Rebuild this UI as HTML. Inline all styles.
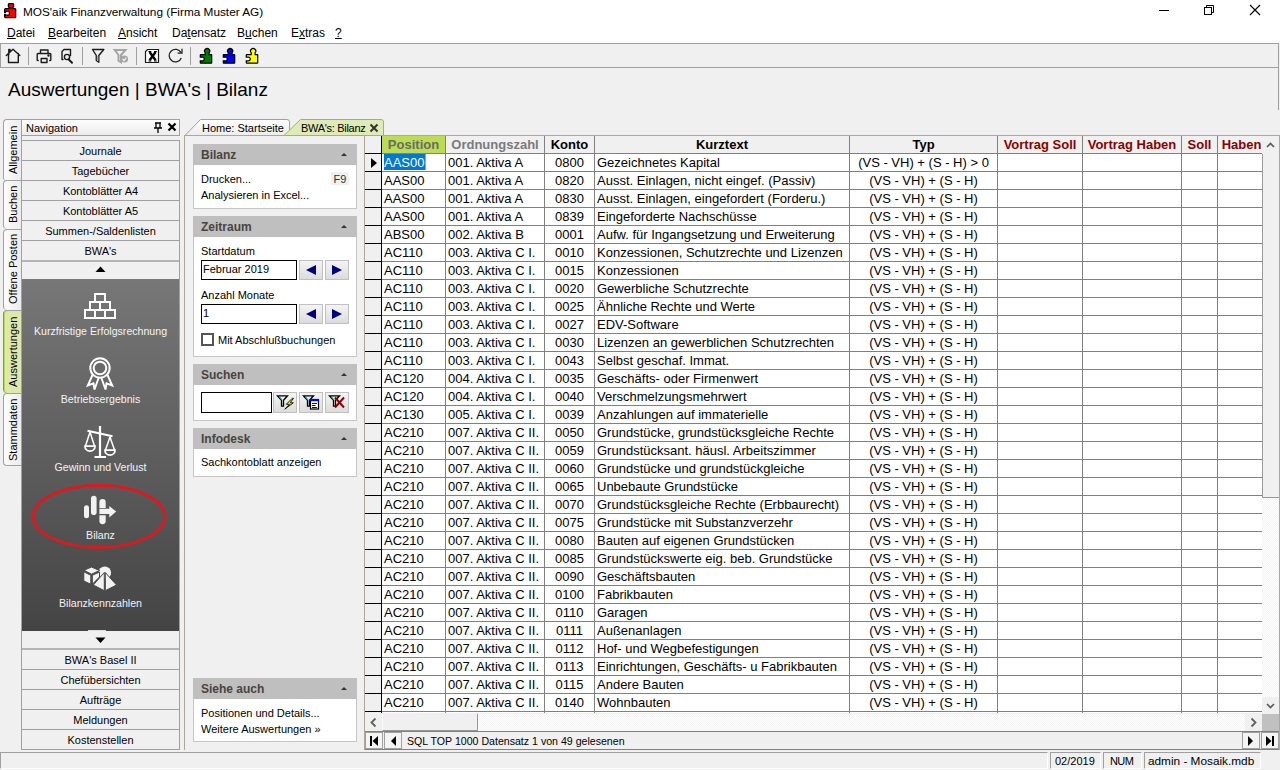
<!DOCTYPE html>
<html><head><meta charset="utf-8"><style>
*{margin:0;padding:0;box-sizing:border-box}
html,body{width:1280px;height:770px;overflow:hidden;background:#f0f0f0;font-family:"Liberation Sans",sans-serif;color:#000;position:relative}
.a{position:absolute}
.hc{position:absolute;top:136px;height:17px;line-height:17px;font-size:13px;font-weight:bold;text-align:center;white-space:nowrap;overflow:hidden}
.c{position:absolute;height:17px;line-height:17px;font-size:13px;white-space:nowrap}
.cc{text-align:center}
.menu span{position:absolute;top:26px;font-size:12px;line-height:14px;white-space:nowrap}
.navb{position:absolute;left:22px;width:157px;height:19px;line-height:21px;font-size:11px;text-align:center;color:#000;background:#f0f0f0}
.navl{position:absolute;left:22px;width:157px;height:1px;background:#a0a0a0}
.vt{position:absolute;left:3px;width:18px;border:1px solid #a0a0a0;border-right:none;border-radius:4px 0 0 4px;background:linear-gradient(to right,#fcfcfc,#ececec)}
.vtt{position:absolute;margin-left:-1px;font-size:11px;white-space:nowrap;transform:rotate(-90deg);transform-origin:0 0}
.ni{position:absolute;left:22px;width:157px;text-align:center;color:#f4f4f4;font-size:10.6px;line-height:14px;white-space:nowrap}
.sh{position:absolute;left:193px;width:164px;height:21px;background:#bfbfbf;color:#474540;font-weight:bold;font-size:12px;line-height:22px;padding-left:8px}
.sh i{position:absolute;left:148px;top:9px;width:0;height:0;border-left:3px solid transparent;border-right:3px solid transparent;border-bottom:3px solid #333}
.sb{position:absolute;left:193px;width:164px;background:#fff;border:1px solid #c6c6c6;border-top:none}
.t11{position:absolute;font-size:11px;white-space:nowrap;line-height:13px}
.inp{position:absolute;border:1px solid #000;background:#fff}
.btn{position:absolute;width:24px;height:20px;border:1px solid #c0c0c0;background:linear-gradient(#f4f4f4,#dcdcdc)}
.stp{position:absolute;top:752px;height:17px;border-top:1px solid #a0a0a0;border-left:1px solid #a0a0a0;border-bottom:1px solid #fff;border-right:1px solid #fff;font-size:11px;line-height:16px;padding-left:4px;white-space:nowrap}
</style></head><body>
<!-- title bar -->
<div class="a" style="left:0;top:0;width:1280px;height:43px;background:#fff"></div>
<svg class="a" style="left:0;top:0" width="20" height="20" viewBox="0 0 20 20"><path d="M4.6 12.4V9.4L5.4 8.6H9.8V7.4H9L8.4 6.8V4.2L9 3.6H13L13.6 4.2V6.8L13 7.4H12.2V8.6H15L15.7 9.3V16.9L15 17.6H5.3L4.6 16.9V14.4H5.3L5.9 15.2H8.7L9.3 14.6V12L8.7 11.4H6L5.4 12.4Z" fill="#f00" stroke="#000" stroke-width="1.25"/></svg>
<div class="a" style="left:23px;top:5px;font-size:11.8px;line-height:14px;white-space:nowrap">MOS'aik Finanzverwaltung (Firma Muster AG)</div>
<div class="a" style="left:1159px;top:10px;width:10px;height:1px;background:#000"></div>
<svg class="a" style="left:1203px;top:4px" width="12" height="12"><rect x="1.5" y="3.5" width="7" height="7" fill="none" stroke="#000"/><path d="M3.5 3.5V1.5H10.5V8.5H8.5" fill="none" stroke="#000"/></svg>
<svg class="a" style="left:1249px;top:4px" width="12" height="12"><path d="M1 1L11 11M11 1L1 11" stroke="#000" stroke-width="1.1"/></svg>
<!-- menu -->
<div class="menu">
<span style="left:7px"><u>D</u>atei</span>
<span style="left:48px"><u>B</u>earbeiten</span>
<span style="left:118px"><u>A</u>nsicht</span>
<span style="left:172px">Da<u>t</u>ensatz</span>
<span style="left:237px">B<u>u</u>chen</span>
<span style="left:291px">E<u>x</u>tras</span>
<span style="left:335px"><u>?</u></span>
</div>
<!-- toolbar -->
<div class="a" style="left:0;top:43px;width:1279px;height:25px;border:1px solid #a0a0a0;background:#f0f0f0"></div>
<div class="a" style="left:28px;top:47px;width:1px;height:18px;background:#a0a0a0"></div>
<div class="a" style="left:82px;top:47px;width:1px;height:18px;background:#a0a0a0"></div>
<div class="a" style="left:136px;top:47px;width:1px;height:18px;background:#a0a0a0"></div>
<div class="a" style="left:190px;top:47px;width:1px;height:18px;background:#a0a0a0"></div>
<svg class="a" style="left:0;top:43px" width="270" height="25" viewBox="0 43 270 25">
<g fill="none" stroke="#1a1a1a" stroke-width="1.4" stroke-linejoin="round" stroke-linecap="round">
<path d="M6.3 55.5L13 49.2L19.8 55.5M8.5 53.5V62.5H18.3V53.5M8.8 55V49.5H10V51.3"/>
<path d="M40.5 53V50H48V53M38.2 60.5H37.8Q37.2 60.5 37.2 59.7V54.3Q37.2 53.5 38 53.5H50Q50.8 53.5 50.8 54.3V59.7Q50.8 60.5 50 60.5H49.8M41.2 58.5H47V62.5H41.2Z"/>
<path d="M63 59.5H62V51.5L64 49.5H70.5V55.5"/><circle cx="48.5" cy="55.5" r="0.5" fill="#000"/>
<circle cx="67" cy="57" r="2.6"/>
<path d="M68.5 59.3L72 62.8" stroke-width="2"/>
<path d="M92.5 49.5H103.8L98.8 55.5V62.3L96.3 60.5V55.5Z"/>
</g>
<path d="M96.8 56V60.2L98.3 61.3V56Z" fill="#aaa"/>
<g fill="none" stroke="#a4a4a4" stroke-width="2"><path d="M114.8 50H125.5L121 55V62.3L118.5 60.8V55Z"/></g><circle cx="124.5" cy="59" r="3.6" fill="#a4a4a4"/><path d="M122.6 59L124 60.5L126.3 57.6" stroke="#f0f0f0" stroke-width="1.2" fill="none"/>
<path d="M147.5 49.5H158.5V62.5H145.5V51.5Z" fill="#fff" stroke="#1a1a1a" stroke-width="1.2"/>
<path d="M149.6 52L155.6 60.3M155.6 52L149.6 60.3" stroke="#000" stroke-width="2.4"/><path d="M148.5 51.5H151.3M154 51.5H156.8M148.5 61H151.3M154 61H156.8" stroke="#000" stroke-width="1"/>
<path d="M181 52.6A6.3 6.3 0 1 0 181.3 58" fill="none" stroke="#222" stroke-width="1.3"/>
<path d="M182 48.8V53.2H177.6" fill="none" stroke="#222" stroke-width="1.3"/>
</svg>
<svg class="a" style="left:196px;top:45px" width="68" height="20" viewBox="196 45 68 20">
<defs><path id="pz" d="M5.2 4.3A2.6 2.6 0 1 1 9.1 4.3V6.1H11.2Q11.7 6.1 11.7 6.6V14.2Q11.7 14.7 11.2 14.7H0.8Q0.3 14.7 0.3 14.2V12.3H1.8A1.9 1.9 0 1 0 1.8 8.7H0.3V6.6Q0.3 6.1 0.8 6.1H5.2Z"/></defs>
<circle cx="202.4" cy="59" r="1.5" fill="#fff"/><use href="#pz" x="200" y="48.5" fill="#007a00" stroke="#000" stroke-width="1.2"/>
<circle cx="225.4" cy="59" r="1.5" fill="#fff"/><use href="#pz" x="223" y="48.5" fill="#0000ff" stroke="#000" stroke-width="1.2"/>
<circle cx="248.4" cy="59" r="1.5" fill="#fff"/><use href="#pz" x="246" y="48.5" fill="#ffff00" stroke="#000" stroke-width="1.2"/>
</svg>
<!-- page title -->
<div class="a" style="left:8px;top:79px;font-size:19px;line-height:22px;white-space:nowrap">Auswertungen | BWA's | Bilanz</div>
<div class="a" style="left:1278px;top:68px;width:1px;height:42px;background:#a0a0a0"></div>

<!-- vertical tabs -->
<div class="a" style="left:21px;top:119px;width:1px;height:347px;background:#a0a0a0"></div>
<div class="vt" style="top:119px;height:62px;border-bottom:none"></div>
<div class="vt" style="top:180px;height:49px;border-bottom:none"></div>
<div class="vt" style="top:229px;height:81px;border-bottom:none"></div>
<div class="vt" style="top:393px;height:73px"></div>
<div class="vt" style="top:310px;height:83px;background:#dde9ac;border-color:#a0a0a0 #a0a0a0 #a0a0a0 #6fb000;border-bottom:none;box-shadow:inset 1px 0 #b6dc4e"></div>
<div class="vtt" style="left:8px;top:174px">Allgemein</div>
<div class="vtt" style="left:8px;top:223px">Buchen</div>
<div class="vtt" style="left:8px;top:304px">Offene Posten</div>
<div class="vtt" style="left:8px;top:387px">Auswertungen</div>
<div class="vtt" style="left:8px;top:461px">Stammdaten</div>

<!-- navigation panel -->
<div class="a" style="left:21px;top:119px;width:159px;height:17px;border:1px solid #a0a0a0;background:linear-gradient(#fdfdfd,#ececec)"></div>
<div class="a" style="left:26px;top:122px;font-size:11px;line-height:13px">Navigation</div>
<svg class="a" style="left:153px;top:122px" width="10" height="11"><path d="M2 1h6M3 1v5M7 1v5M1 6h8M5 6v5" stroke="#000" stroke-width="1.3" fill="none"/></svg>
<svg class="a" style="left:167px;top:122px" width="10" height="10"><path d="M1.5 1.5L8.5 8.5M8.5 1.5L1.5 8.5" stroke="#000" stroke-width="2.2"/></svg>
<div class="a" style="left:21px;top:140px;width:159px;height:610px;border:1px solid #a0a0a0;background:#f0f0f0"></div>
<div class="navb" style="top:141px">Journale</div><div class="navl" style="top:160px"></div><div class="navb" style="top:161px">Tagebücher</div><div class="navl" style="top:180px"></div><div class="navb" style="top:181px">Kontoblätter A4</div><div class="navl" style="top:200px"></div><div class="navb" style="top:201px">Kontoblätter A5</div><div class="navl" style="top:220px"></div><div class="navb" style="top:221px">Summen-/Saldenlisten</div><div class="navl" style="top:240px"></div><div class="navb" style="top:241px">BWA's</div><div class="navl" style="top:260px"></div>
<div class="navl" style="top:260px;height:2px;background:#b4b4b4"></div>
<svg class="a" style="left:95px;top:266px" width="11" height="7"><path d="M5.5 0.5L10.5 6H0.5Z" fill="#000"/></svg>
<div class="a" style="left:22px;top:279px;width:157px;height:352px;background:linear-gradient(#777,#444)"></div>
<div class="a" style="left:88px;top:630px;width:18px;height:1px;background:#ddd"></div>
<svg class="a" style="left:95px;top:637px" width="11" height="7"><path d="M0.5 0.5H10.5L5.5 6Z" fill="#000"/></svg>
<div class="navl" style="top:648px;height:2px;background:#b4b4b4"></div>
<div class="navb" style="top:650px">BWA's Basel II</div><div class="navl" style="top:669px"></div><div class="navb" style="top:670px">Chefübersichten</div><div class="navl" style="top:689px"></div><div class="navb" style="top:690px">Aufträge</div><div class="navl" style="top:709px"></div><div class="navb" style="top:710px">Meldungen</div><div class="navl" style="top:729px"></div><div class="navb" style="top:730px">Kostenstellen</div>

<!-- nav dark items -->
<div class="ni" style="top:324px">Kurzfristige Erfolgsrechnung</div>
<div class="ni" style="top:392px">Betriebsergebnis</div>
<div class="ni" style="top:460px">Gewinn und Verlust</div>
<div class="ni" style="top:528px">Bilanz</div>
<div class="ni" style="top:596px">Bilanzkennzahlen</div>
<svg class="a" style="left:22px;top:279px" width="157" height="352" viewBox="22 279 157 352">
<g fill="none" stroke="#fff" stroke-width="2">
<rect x="85" y="310" width="30" height="8"/><path d="M95 310V318M105 310V318"/>
<rect x="90" y="302" width="20" height="8"/><path d="M100 302V310"/>
<rect x="95" y="294" width="10" height="8"/>
<circle cx="100" cy="368" r="9.7"/><circle cx="100" cy="368" r="6.3"/>
<path d="M92.5 375L87.8 385.5L93.5 383.3L94.5 389.5L98.5 378.2M107.5 375L112.2 385.5L106.5 383.3L105.5 389.5L101.5 378.2" stroke-width="1.9" stroke-linejoin="miter"/>
<path d="M100 426V457M94.5 457H106" stroke-width="2.2"/>
<path d="M87.5 430.8L112.5 436.3" stroke-width="2.2"/>
<path d="M90 432L85.5 446M90 432L94.5 446M110 437L105.5 450M110 437L114.5 450" stroke-width="1.5"/>
<path d="M85 446.2H95A5 5 0 0 1 85 446.2ZM105 450.2H115A5 5 0 0 1 105 450.2Z" stroke-width="1.8"/>
</g>
<g fill="#f2f2f2">
<rect x="84" y="505.3" width="5" height="13" rx="2.5"/>
<rect x="91" y="495.7" width="5.6" height="19.4" rx="2.8"/>
<path d="M99.4 508V502.2A3.15 3.15 0 0 1 105.7 502.2V508Z"/>
<path d="M99.4 508.8H109.3V506L116.2 511.6L109.3 517.5V514H99.4Z"/>
<path d="M99.4 515.2H105.7V521A3.15 3.15 0 0 1 99.4 521Z"/>
<circle cx="104.8" cy="572.8" r="6.3"/>
</g>
<g fill="#f2f2f2" stroke="#474747" stroke-width="1" stroke-linejoin="round">
<path d="M84 570.3L91.5 567L99.5 570.5L91.5 574.2Z"/>
<path d="M83.8 571.8L90.8 575.3V584.2L83.8 581Z"/>
<path d="M92.3 575.3L99.5 572V577L92.3 584.2Z"/>
<path d="M104.3 572.5L93.3 585L104.3 590.7Z"/>
<path d="M105.3 572.5L116.5 585L105.3 590.7Z"/>
</g>
</svg>
<svg class="a" style="left:30px;top:482px" width="140" height="70"><ellipse cx="69" cy="34.4" rx="65.8" ry="31" fill="none" stroke="#e8141c" stroke-width="2.6"/></svg>

<!-- document tabs -->
<svg class="a" style="left:184px;top:118px" width="202" height="19">
<defs><linearGradient id="tg" x1="0" y1="0" x2="0" y2="1"><stop offset="0" stop-color="#fff"/><stop offset="1" stop-color="#ececec"/></linearGradient></defs>
<path d="M1 17.5 L16.5 1.5 H103 Q105.5 1.5 105.5 4 V17.5" fill="url(#tg)" stroke="#a0a0a0"/>
<path d="M100 17.5 L116.5 1.5 H197 Q199.5 1.5 199.5 4 V17.5 Z" fill="#dfeab6" stroke="#8cc63f"/>
</svg>
<div class="a" style="left:202px;top:122px;font-size:11px;line-height:13px;white-space:nowrap">Home: Startseite</div>
<div class="a" style="left:301px;top:122px;font-size:11px;line-height:13px;white-space:nowrap;letter-spacing:-0.3px">BWA's: Bilanz</div>
<svg class="a" style="left:369px;top:123px" width="10" height="10"><path d="M1.5 1.5L8.5 8.5M8.5 1.5L1.5 8.5" stroke="#333" stroke-width="2"/></svg>

<!-- tab page frame -->
<div class="a" style="left:184px;top:135px;width:1096px;height:615px;border:1px solid #aca899;border-bottom:none;background:#f0f0f0"></div>

<!-- task pane sections -->
<div class="sh" style="top:144px">Bilanz<i></i></div>
<div class="sb" style="top:165px;height:44px"></div>
<div class="t11" style="left:201px;top:173px">Drucken...</div>
<div class="a" style="left:331px;top:172px;width:18px;height:13px;background:#f0f0f0;font-size:11px;line-height:14px;text-align:center;color:#333">F9</div>
<div class="t11" style="left:201px;top:189px">Analysieren in Excel...</div>

<div class="sh" style="top:216px">Zeitraum<i></i></div>
<div class="sb" style="top:237px;height:120px"></div>
<div class="t11" style="left:201px;top:245px">Startdatum</div>
<div class="inp" style="left:201px;top:260px;width:96px;height:20px"></div>
<div class="t11" style="left:203px;top:263px">Februar 2019</div>
<div class="btn" style="left:299px;top:260px"></div><div class="btn" style="left:325px;top:260px"></div>
<svg class="a" style="left:305px;top:264px" width="12" height="12"><path d="M11 1V11L1 6Z" fill="#000080"/></svg>
<svg class="a" style="left:331px;top:264px" width="12" height="12"><path d="M1 1V11L11 6Z" fill="#000080"/></svg>
<div class="t11" style="left:201px;top:289px">Anzahl Monate</div>
<div class="inp" style="left:201px;top:304px;width:96px;height:20px"></div>
<div class="t11" style="left:203px;top:307px">1</div>
<div class="btn" style="left:299px;top:304px"></div><div class="btn" style="left:325px;top:304px"></div>
<svg class="a" style="left:305px;top:308px" width="12" height="12"><path d="M11 1V11L1 6Z" fill="#000080"/></svg>
<svg class="a" style="left:331px;top:308px" width="12" height="12"><path d="M1 1V11L11 6Z" fill="#000080"/></svg>
<div class="a" style="left:201px;top:333px;width:13px;height:13px;border:2px solid #555;background:#fff"></div>
<div class="t11" style="left:218px;top:334px">Mit Abschlußbuchungen</div>

<div class="sh" style="top:364px">Suchen<i></i></div>
<div class="sb" style="top:385px;height:36px"></div>
<div class="inp" style="left:201px;top:392px;width:71px;height:21px"></div>
<div class="btn" style="left:273px;top:392px;height:21px"></div><div class="btn" style="left:299px;top:392px;height:21px"></div><div class="btn" style="left:325px;top:392px;height:21px"></div>

<svg class="a" style="left:273px;top:392px" width="77" height="21" viewBox="273 392 77 21">
<g stroke="#000" stroke-width="1.3" fill="none" stroke-linejoin="miter">
<path d="M277.5 395.8H287.5L283.5 400.2V406.2H281.5V400.2Z"/>
<path d="M303.5 395.8H313.5L309.5 400.2V406.2H307.5V400.2Z"/>
<path d="M329.5 395.8H339.5L335.5 400.2V406.2H333.5V400.2Z"/>
</g>
<path d="M279.5 396.8L282 400M305.5 396.8L308 400M331.5 396.8L334 400" stroke="#00b4b4" stroke-width="1.1"/>
<path d="M292.3 398.3L286.3 404.3H289.5L284.8 409.2L293.3 402.8H290.2L293.5 398.3Z" fill="#ffff00" stroke="#000" stroke-width="0.9" stroke-linejoin="round"/>
<rect x="310.5" y="399.5" width="8" height="9.5" fill="#fff" stroke="#000" stroke-width="1.2"/>
<rect x="310" y="399" width="9" height="2.2" fill="#0000ff"/>
<path d="M312 403.5H317M312 405.5H315.5M312 407.5H317" stroke="#000" stroke-width="0.9"/>
<path d="M335 397.5L344 407.5M344 397.5L335 407.5" stroke="#8b0000" stroke-width="1.9"/>
</svg>
<div class="sh" style="top:428px">Infodesk<i></i></div>
<div class="sb" style="top:449px;height:28px"></div>
<div class="t11" style="left:201px;top:456px">Sachkontoblatt anzeigen</div>

<div class="sh" style="top:678px">Siehe auch<i></i></div>
<div class="sb" style="top:699px;height:43px"></div>
<div class="t11" style="left:201px;top:707px">Positionen und Details...</div>
<div class="t11" style="left:201px;top:723px">Weitere Auswertungen »</div>

<!-- grid -->
<div class="a" style="left:364px;top:135px;width:916px;height:615px;border:1px solid #aca899;border-right:1px solid #aca899;background:#f0f0f0"></div>
<div class="hc" style="left:382px;width:63px;background:#bcdc56;color:#6a6a6a">Position</div>
<div class="hc" style="left:446px;width:98px;background:#f0f0f0;color:#7a7a7a">Ordnungszahl</div>
<div class="hc" style="left:545px;width:49px;background:#f0f0f0;color:#000">Konto</div>
<div class="hc" style="left:595px;width:254px;background:#f0f0f0;color:#000">Kurztext</div>
<div class="hc" style="left:850px;width:147px;background:#f0f0f0;color:#000">Typ</div>
<div class="hc" style="left:998px;width:84px;background:#f0f0f0;color:#8b0000">Vortrag Soll</div>
<div class="hc" style="left:1083px;width:98px;background:#f0f0f0;color:#8b0000">Vortrag Haben</div>
<div class="hc" style="left:1182px;width:35px;background:#f0f0f0;color:#8b0000">Soll</div>
<div class="hc" style="left:1218px;width:47px;background:#f0f0f0;color:#8b0000">Haben</div>
<div style="position:absolute;left:382px;top:154px;width:880px;height:559px;background:#fff"></div>
<div style="position:absolute;left:382px;top:153px;width:880px;height:1px;background:#808080"></div>
<div style="position:absolute;left:382px;top:171px;width:880px;height:1px;background:#808080"></div>
<div style="position:absolute;left:382px;top:189px;width:880px;height:1px;background:#808080"></div>
<div style="position:absolute;left:382px;top:207px;width:880px;height:1px;background:#808080"></div>
<div style="position:absolute;left:382px;top:225px;width:880px;height:1px;background:#808080"></div>
<div style="position:absolute;left:382px;top:243px;width:880px;height:1px;background:#808080"></div>
<div style="position:absolute;left:382px;top:261px;width:880px;height:1px;background:#808080"></div>
<div style="position:absolute;left:382px;top:279px;width:880px;height:1px;background:#808080"></div>
<div style="position:absolute;left:382px;top:297px;width:880px;height:1px;background:#808080"></div>
<div style="position:absolute;left:382px;top:315px;width:880px;height:1px;background:#808080"></div>
<div style="position:absolute;left:382px;top:333px;width:880px;height:1px;background:#808080"></div>
<div style="position:absolute;left:382px;top:351px;width:880px;height:1px;background:#808080"></div>
<div style="position:absolute;left:382px;top:369px;width:880px;height:1px;background:#808080"></div>
<div style="position:absolute;left:382px;top:387px;width:880px;height:1px;background:#808080"></div>
<div style="position:absolute;left:382px;top:405px;width:880px;height:1px;background:#808080"></div>
<div style="position:absolute;left:382px;top:423px;width:880px;height:1px;background:#808080"></div>
<div style="position:absolute;left:382px;top:441px;width:880px;height:1px;background:#808080"></div>
<div style="position:absolute;left:382px;top:459px;width:880px;height:1px;background:#808080"></div>
<div style="position:absolute;left:382px;top:477px;width:880px;height:1px;background:#808080"></div>
<div style="position:absolute;left:382px;top:495px;width:880px;height:1px;background:#808080"></div>
<div style="position:absolute;left:382px;top:513px;width:880px;height:1px;background:#808080"></div>
<div style="position:absolute;left:382px;top:531px;width:880px;height:1px;background:#808080"></div>
<div style="position:absolute;left:382px;top:549px;width:880px;height:1px;background:#808080"></div>
<div style="position:absolute;left:382px;top:567px;width:880px;height:1px;background:#808080"></div>
<div style="position:absolute;left:382px;top:585px;width:880px;height:1px;background:#808080"></div>
<div style="position:absolute;left:382px;top:603px;width:880px;height:1px;background:#808080"></div>
<div style="position:absolute;left:382px;top:621px;width:880px;height:1px;background:#808080"></div>
<div style="position:absolute;left:382px;top:639px;width:880px;height:1px;background:#808080"></div>
<div style="position:absolute;left:382px;top:657px;width:880px;height:1px;background:#808080"></div>
<div style="position:absolute;left:382px;top:675px;width:880px;height:1px;background:#808080"></div>
<div style="position:absolute;left:382px;top:693px;width:880px;height:1px;background:#808080"></div>
<div style="position:absolute;left:382px;top:711px;width:880px;height:1px;background:#808080"></div>
<div style="position:absolute;left:445px;top:136px;width:1px;height:577px;background:#808080"></div>
<div style="position:absolute;left:544px;top:136px;width:1px;height:577px;background:#808080"></div>
<div style="position:absolute;left:594px;top:136px;width:1px;height:577px;background:#808080"></div>
<div style="position:absolute;left:849px;top:136px;width:1px;height:577px;background:#808080"></div>
<div style="position:absolute;left:997px;top:136px;width:1px;height:577px;background:#808080"></div>
<div style="position:absolute;left:1082px;top:136px;width:1px;height:577px;background:#808080"></div>
<div style="position:absolute;left:1181px;top:136px;width:1px;height:577px;background:#808080"></div>
<div style="position:absolute;left:1217px;top:136px;width:1px;height:577px;background:#808080"></div>
<div style="position:absolute;left:365px;top:136px;width:16px;height:577px;background:#f0f0f0"></div>
<div style="position:absolute;left:381px;top:136px;width:1px;height:577px;background:#000"></div>
<div style="position:absolute;left:365px;top:153px;width:16px;height:1px;background:#000"></div>
<div style="position:absolute;left:365px;top:171px;width:16px;height:1px;background:#000"></div>
<div style="position:absolute;left:365px;top:189px;width:16px;height:1px;background:#000"></div>
<div style="position:absolute;left:365px;top:207px;width:16px;height:1px;background:#000"></div>
<div style="position:absolute;left:365px;top:225px;width:16px;height:1px;background:#000"></div>
<div style="position:absolute;left:365px;top:243px;width:16px;height:1px;background:#000"></div>
<div style="position:absolute;left:365px;top:261px;width:16px;height:1px;background:#000"></div>
<div style="position:absolute;left:365px;top:279px;width:16px;height:1px;background:#000"></div>
<div style="position:absolute;left:365px;top:297px;width:16px;height:1px;background:#000"></div>
<div style="position:absolute;left:365px;top:315px;width:16px;height:1px;background:#000"></div>
<div style="position:absolute;left:365px;top:333px;width:16px;height:1px;background:#000"></div>
<div style="position:absolute;left:365px;top:351px;width:16px;height:1px;background:#000"></div>
<div style="position:absolute;left:365px;top:369px;width:16px;height:1px;background:#000"></div>
<div style="position:absolute;left:365px;top:387px;width:16px;height:1px;background:#000"></div>
<div style="position:absolute;left:365px;top:405px;width:16px;height:1px;background:#000"></div>
<div style="position:absolute;left:365px;top:423px;width:16px;height:1px;background:#000"></div>
<div style="position:absolute;left:365px;top:441px;width:16px;height:1px;background:#000"></div>
<div style="position:absolute;left:365px;top:459px;width:16px;height:1px;background:#000"></div>
<div style="position:absolute;left:365px;top:477px;width:16px;height:1px;background:#000"></div>
<div style="position:absolute;left:365px;top:495px;width:16px;height:1px;background:#000"></div>
<div style="position:absolute;left:365px;top:513px;width:16px;height:1px;background:#000"></div>
<div style="position:absolute;left:365px;top:531px;width:16px;height:1px;background:#000"></div>
<div style="position:absolute;left:365px;top:549px;width:16px;height:1px;background:#000"></div>
<div style="position:absolute;left:365px;top:567px;width:16px;height:1px;background:#000"></div>
<div style="position:absolute;left:365px;top:585px;width:16px;height:1px;background:#000"></div>
<div style="position:absolute;left:365px;top:603px;width:16px;height:1px;background:#000"></div>
<div style="position:absolute;left:365px;top:621px;width:16px;height:1px;background:#000"></div>
<div style="position:absolute;left:365px;top:639px;width:16px;height:1px;background:#000"></div>
<div style="position:absolute;left:365px;top:657px;width:16px;height:1px;background:#000"></div>
<div style="position:absolute;left:365px;top:675px;width:16px;height:1px;background:#000"></div>
<div style="position:absolute;left:365px;top:693px;width:16px;height:1px;background:#000"></div>
<div style="position:absolute;left:365px;top:711px;width:16px;height:1px;background:#000"></div>
<svg style="position:absolute;left:370px;top:157px" width="8" height="12"><path d="M1 1 L7 6 L1 11 Z" fill="#000"/></svg>
<div style="position:absolute;left:384px;top:154px;width:41px;height:16px;background:#0078d7"></div>
<div style="position:absolute;left:425px;top:154px;width:1px;height:16px;background:#ff8c1a"></div>
<div class="c" style="left:384px;top:154px;color:#fff">AAS00</div>
<div class="c" style="left:448px;top:154px">001. Aktiva A</div>
<div class="c cc" style="left:545px;width:49px;top:154px">0800</div>
<div class="c" style="left:597px;top:154px">Gezeichnetes Kapital</div>
<div class="c cc" style="left:850px;width:147px;top:154px">(VS - VH) + (S - H) &gt; 0</div>
<div class="c" style="left:384px;top:172px">AAS00</div>
<div class="c" style="left:448px;top:172px">001. Aktiva A</div>
<div class="c cc" style="left:545px;width:49px;top:172px">0820</div>
<div class="c" style="left:597px;top:172px">Ausst. Einlagen, nicht eingef. (Passiv)</div>
<div class="c cc" style="left:850px;width:147px;top:172px">(VS - VH) + (S - H)</div>
<div class="c" style="left:384px;top:190px">AAS00</div>
<div class="c" style="left:448px;top:190px">001. Aktiva A</div>
<div class="c cc" style="left:545px;width:49px;top:190px">0830</div>
<div class="c" style="left:597px;top:190px">Ausst. Einlagen, eingefordert (Forderu.)</div>
<div class="c cc" style="left:850px;width:147px;top:190px">(VS - VH) + (S - H)</div>
<div class="c" style="left:384px;top:208px">AAS00</div>
<div class="c" style="left:448px;top:208px">001. Aktiva A</div>
<div class="c cc" style="left:545px;width:49px;top:208px">0839</div>
<div class="c" style="left:597px;top:208px">Eingeforderte Nachschüsse</div>
<div class="c cc" style="left:850px;width:147px;top:208px">(VS - VH) + (S - H)</div>
<div class="c" style="left:384px;top:226px">ABS00</div>
<div class="c" style="left:448px;top:226px">002. Aktiva B</div>
<div class="c cc" style="left:545px;width:49px;top:226px">0001</div>
<div class="c" style="left:597px;top:226px">Aufw. für Ingangsetzung und Erweiterung</div>
<div class="c cc" style="left:850px;width:147px;top:226px">(VS - VH) + (S - H)</div>
<div class="c" style="left:384px;top:244px">AC110</div>
<div class="c" style="left:448px;top:244px">003. Aktiva C I.</div>
<div class="c cc" style="left:545px;width:49px;top:244px">0010</div>
<div class="c" style="left:597px;top:244px">Konzessionen, Schutzrechte und Lizenzen</div>
<div class="c cc" style="left:850px;width:147px;top:244px">(VS - VH) + (S - H)</div>
<div class="c" style="left:384px;top:262px">AC110</div>
<div class="c" style="left:448px;top:262px">003. Aktiva C I.</div>
<div class="c cc" style="left:545px;width:49px;top:262px">0015</div>
<div class="c" style="left:597px;top:262px">Konzessionen</div>
<div class="c cc" style="left:850px;width:147px;top:262px">(VS - VH) + (S - H)</div>
<div class="c" style="left:384px;top:280px">AC110</div>
<div class="c" style="left:448px;top:280px">003. Aktiva C I.</div>
<div class="c cc" style="left:545px;width:49px;top:280px">0020</div>
<div class="c" style="left:597px;top:280px">Gewerbliche Schutzrechte</div>
<div class="c cc" style="left:850px;width:147px;top:280px">(VS - VH) + (S - H)</div>
<div class="c" style="left:384px;top:298px">AC110</div>
<div class="c" style="left:448px;top:298px">003. Aktiva C I.</div>
<div class="c cc" style="left:545px;width:49px;top:298px">0025</div>
<div class="c" style="left:597px;top:298px">Ähnliche Rechte und Werte</div>
<div class="c cc" style="left:850px;width:147px;top:298px">(VS - VH) + (S - H)</div>
<div class="c" style="left:384px;top:316px">AC110</div>
<div class="c" style="left:448px;top:316px">003. Aktiva C I.</div>
<div class="c cc" style="left:545px;width:49px;top:316px">0027</div>
<div class="c" style="left:597px;top:316px">EDV-Software</div>
<div class="c cc" style="left:850px;width:147px;top:316px">(VS - VH) + (S - H)</div>
<div class="c" style="left:384px;top:334px">AC110</div>
<div class="c" style="left:448px;top:334px">003. Aktiva C I.</div>
<div class="c cc" style="left:545px;width:49px;top:334px">0030</div>
<div class="c" style="left:597px;top:334px">Lizenzen an gewerblichen Schutzrechten</div>
<div class="c cc" style="left:850px;width:147px;top:334px">(VS - VH) + (S - H)</div>
<div class="c" style="left:384px;top:352px">AC110</div>
<div class="c" style="left:448px;top:352px">003. Aktiva C I.</div>
<div class="c cc" style="left:545px;width:49px;top:352px">0043</div>
<div class="c" style="left:597px;top:352px">Selbst geschaf. Immat.</div>
<div class="c cc" style="left:850px;width:147px;top:352px">(VS - VH) + (S - H)</div>
<div class="c" style="left:384px;top:370px">AC120</div>
<div class="c" style="left:448px;top:370px">004. Aktiva C I.</div>
<div class="c cc" style="left:545px;width:49px;top:370px">0035</div>
<div class="c" style="left:597px;top:370px">Geschäfts- oder Firmenwert</div>
<div class="c cc" style="left:850px;width:147px;top:370px">(VS - VH) + (S - H)</div>
<div class="c" style="left:384px;top:388px">AC120</div>
<div class="c" style="left:448px;top:388px">004. Aktiva C I.</div>
<div class="c cc" style="left:545px;width:49px;top:388px">0040</div>
<div class="c" style="left:597px;top:388px">Verschmelzungsmehrwert</div>
<div class="c cc" style="left:850px;width:147px;top:388px">(VS - VH) + (S - H)</div>
<div class="c" style="left:384px;top:406px">AC130</div>
<div class="c" style="left:448px;top:406px">005. Aktiva C I.</div>
<div class="c cc" style="left:545px;width:49px;top:406px">0039</div>
<div class="c" style="left:597px;top:406px">Anzahlungen auf immaterielle</div>
<div class="c cc" style="left:850px;width:147px;top:406px">(VS - VH) + (S - H)</div>
<div class="c" style="left:384px;top:424px">AC210</div>
<div class="c" style="left:448px;top:424px">007. Aktiva C II.</div>
<div class="c cc" style="left:545px;width:49px;top:424px">0050</div>
<div class="c" style="left:597px;top:424px">Grundstücke, grundstücksgleiche Rechte</div>
<div class="c cc" style="left:850px;width:147px;top:424px">(VS - VH) + (S - H)</div>
<div class="c" style="left:384px;top:442px">AC210</div>
<div class="c" style="left:448px;top:442px">007. Aktiva C II.</div>
<div class="c cc" style="left:545px;width:49px;top:442px">0059</div>
<div class="c" style="left:597px;top:442px">Grundstücksant. häusl. Arbeitszimmer</div>
<div class="c cc" style="left:850px;width:147px;top:442px">(VS - VH) + (S - H)</div>
<div class="c" style="left:384px;top:460px">AC210</div>
<div class="c" style="left:448px;top:460px">007. Aktiva C II.</div>
<div class="c cc" style="left:545px;width:49px;top:460px">0060</div>
<div class="c" style="left:597px;top:460px">Grundstücke und grundstückgleiche</div>
<div class="c cc" style="left:850px;width:147px;top:460px">(VS - VH) + (S - H)</div>
<div class="c" style="left:384px;top:478px">AC210</div>
<div class="c" style="left:448px;top:478px">007. Aktiva C II.</div>
<div class="c cc" style="left:545px;width:49px;top:478px">0065</div>
<div class="c" style="left:597px;top:478px">Unbebaute Grundstücke</div>
<div class="c cc" style="left:850px;width:147px;top:478px">(VS - VH) + (S - H)</div>
<div class="c" style="left:384px;top:496px">AC210</div>
<div class="c" style="left:448px;top:496px">007. Aktiva C II.</div>
<div class="c cc" style="left:545px;width:49px;top:496px">0070</div>
<div class="c" style="left:597px;top:496px">Grundstücksgleiche Rechte (Erbbaurecht)</div>
<div class="c cc" style="left:850px;width:147px;top:496px">(VS - VH) + (S - H)</div>
<div class="c" style="left:384px;top:514px">AC210</div>
<div class="c" style="left:448px;top:514px">007. Aktiva C II.</div>
<div class="c cc" style="left:545px;width:49px;top:514px">0075</div>
<div class="c" style="left:597px;top:514px">Grundstücke mit Substanzverzehr</div>
<div class="c cc" style="left:850px;width:147px;top:514px">(VS - VH) + (S - H)</div>
<div class="c" style="left:384px;top:532px">AC210</div>
<div class="c" style="left:448px;top:532px">007. Aktiva C II.</div>
<div class="c cc" style="left:545px;width:49px;top:532px">0080</div>
<div class="c" style="left:597px;top:532px">Bauten auf eigenen Grundstücken</div>
<div class="c cc" style="left:850px;width:147px;top:532px">(VS - VH) + (S - H)</div>
<div class="c" style="left:384px;top:550px">AC210</div>
<div class="c" style="left:448px;top:550px">007. Aktiva C II.</div>
<div class="c cc" style="left:545px;width:49px;top:550px">0085</div>
<div class="c" style="left:597px;top:550px">Grundstückswerte eig. beb. Grundstücke</div>
<div class="c cc" style="left:850px;width:147px;top:550px">(VS - VH) + (S - H)</div>
<div class="c" style="left:384px;top:568px">AC210</div>
<div class="c" style="left:448px;top:568px">007. Aktiva C II.</div>
<div class="c cc" style="left:545px;width:49px;top:568px">0090</div>
<div class="c" style="left:597px;top:568px">Geschäftsbauten</div>
<div class="c cc" style="left:850px;width:147px;top:568px">(VS - VH) + (S - H)</div>
<div class="c" style="left:384px;top:586px">AC210</div>
<div class="c" style="left:448px;top:586px">007. Aktiva C II.</div>
<div class="c cc" style="left:545px;width:49px;top:586px">0100</div>
<div class="c" style="left:597px;top:586px">Fabrikbauten</div>
<div class="c cc" style="left:850px;width:147px;top:586px">(VS - VH) + (S - H)</div>
<div class="c" style="left:384px;top:604px">AC210</div>
<div class="c" style="left:448px;top:604px">007. Aktiva C II.</div>
<div class="c cc" style="left:545px;width:49px;top:604px">0110</div>
<div class="c" style="left:597px;top:604px">Garagen</div>
<div class="c cc" style="left:850px;width:147px;top:604px">(VS - VH) + (S - H)</div>
<div class="c" style="left:384px;top:622px">AC210</div>
<div class="c" style="left:448px;top:622px">007. Aktiva C II.</div>
<div class="c cc" style="left:545px;width:49px;top:622px">0111</div>
<div class="c" style="left:597px;top:622px">Außenanlagen</div>
<div class="c cc" style="left:850px;width:147px;top:622px">(VS - VH) + (S - H)</div>
<div class="c" style="left:384px;top:640px">AC210</div>
<div class="c" style="left:448px;top:640px">007. Aktiva C II.</div>
<div class="c cc" style="left:545px;width:49px;top:640px">0112</div>
<div class="c" style="left:597px;top:640px">Hof- und Wegbefestigungen</div>
<div class="c cc" style="left:850px;width:147px;top:640px">(VS - VH) + (S - H)</div>
<div class="c" style="left:384px;top:658px">AC210</div>
<div class="c" style="left:448px;top:658px">007. Aktiva C II.</div>
<div class="c cc" style="left:545px;width:49px;top:658px">0113</div>
<div class="c" style="left:597px;top:658px">Einrichtungen, Geschäfts- u Fabrikbauten</div>
<div class="c cc" style="left:850px;width:147px;top:658px">(VS - VH) + (S - H)</div>
<div class="c" style="left:384px;top:676px">AC210</div>
<div class="c" style="left:448px;top:676px">007. Aktiva C II.</div>
<div class="c cc" style="left:545px;width:49px;top:676px">0115</div>
<div class="c" style="left:597px;top:676px">Andere Bauten</div>
<div class="c cc" style="left:850px;width:147px;top:676px">(VS - VH) + (S - H)</div>
<div class="c" style="left:384px;top:694px">AC210</div>
<div class="c" style="left:448px;top:694px">007. Aktiva C II.</div>
<div class="c cc" style="left:545px;width:49px;top:694px">0140</div>
<div class="c" style="left:597px;top:694px">Wohnbauten</div>
<div class="c cc" style="left:850px;width:147px;top:694px">(VS - VH) + (S - H)</div>
<!-- v scrollbar -->
<div class="a" style="left:1262px;top:136px;width:17px;height:578px;background:repeating-conic-gradient(#f4f4f4 0 25%,#fff 0 50%) 0 0/2px 2px"></div>
<div class="a" style="left:1262px;top:136px;width:17px;height:18px;background:#f0f0f0"></div>
<div class="a" style="left:1262px;top:154px;width:17px;height:344px;background:#f0f0f0;border-left:1px solid #999;border-bottom:1px solid #999"></div>
<div class="a" style="left:1262px;top:697px;width:17px;height:17px;background:#f0f0f0"></div>
<svg class="a" style="left:1265px;top:140px" width="11" height="9"><path d="M2 7L5.5 3.5L9 7" stroke="#5a5a5a" stroke-width="1.7" fill="none"/></svg>
<svg class="a" style="left:1265px;top:702px" width="11" height="9"><path d="M2 2L5.5 5.5L9 2" stroke="#5a5a5a" stroke-width="1.7" fill="none"/></svg>
<!-- h scrollbar -->
<div class="a" style="left:365px;top:714px;width:897px;height:17px;background:repeating-conic-gradient(#f4f4f4 0 25%,#fff 0 50%) 0 0/2px 2px"></div>
<div class="a" style="left:365px;top:714px;width:17px;height:17px;background:#f0f0f0"></div>
<div class="a" style="left:382px;top:714px;width:96px;height:17px;background:#f0f0f0;border-left:1px solid #fafafa;border-right:1px solid #999;border-bottom:1px solid #999"></div>
<div class="a" style="left:1245px;top:714px;width:17px;height:17px;background:#f0f0f0"></div>
<div class="a" style="left:1262px;top:714px;width:17px;height:17px;background:#c0c0c0"></div>
<svg class="a" style="left:369px;top:717px" width="10" height="11"><path d="M6.5 1.5L2.5 5.5L6.5 9.5" stroke="#606060" stroke-width="1.8" fill="none"/></svg>
<svg class="a" style="left:1249px;top:717px" width="10" height="11"><path d="M2.5 1.5L6.5 5.5L2.5 9.5" stroke="#606060" stroke-width="1.8" fill="none"/></svg>
<!-- navigator -->
<div class="a" style="left:365px;top:731px;width:914px;height:19px;background:#f0f0f0;border-top:1px solid #808080;border-bottom:1px solid #808080"></div>
<div class="a" style="left:365px;top:732px;width:18px;height:17px;border:1px solid #a0a0a0;background:#f4f4f4"></div>
<div class="a" style="left:384px;top:732px;width:18px;height:17px;border:1px solid #a0a0a0;background:#f4f4f4"></div>
<div class="a" style="left:1242px;top:732px;width:18px;height:17px;border:1px solid #a0a0a0;background:#f4f4f4"></div>
<div class="a" style="left:1261px;top:732px;width:18px;height:17px;border:1px solid #a0a0a0;background:#f4f4f4"></div>
<svg class="a" style="left:369px;top:735px" width="10" height="12"><path d="M1 1h2v10H1z M9 1V11L3.5 6Z" fill="#000"/></svg>
<svg class="a" style="left:389px;top:735px" width="10" height="12"><path d="M7 1V11L2 6Z" fill="#000"/></svg>
<svg class="a" style="left:1246px;top:735px" width="10" height="12"><path d="M2 1V11L7 6Z" fill="#000"/></svg>
<svg class="a" style="left:1265px;top:735px" width="10" height="12"><path d="M1 1V11L6.5 6Z M7 1h2v10H7z" fill="#000"/></svg>
<div class="t11" style="left:407px;top:735px;font-size:10.6px">SQL TOP 1000 Datensatz 1 von 49 gelesenen</div>

<!-- status bar -->
<div class="a" style="left:0;top:752px;width:1280px;height:18px;background:#f0f0f0"></div>
<div class="stp" style="left:0;width:1048px"></div>
<div class="stp" style="left:1050px;width:51px;padding-left:4px">02/2019</div>
<div class="stp" style="left:1103px;width:39px;padding-left:6px;letter-spacing:-0.6px">NUM</div>
<div class="stp" style="left:1144px;width:117px;padding-left:3px;font-size:11.8px">admin - Mosaik.mdb</div>
</body></html>
